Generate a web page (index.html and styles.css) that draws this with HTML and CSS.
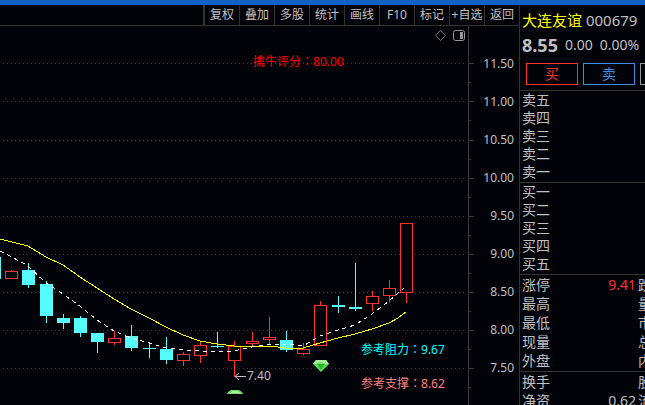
FILE: index.html
```html
<!DOCTYPE html>
<html lang="zh-CN">
<head>
    <meta charset="UTF-8">
    <meta name="viewport" content="width=device-width, initial-scale=1.0">
    <title>大连友谊 000679</title>
    <link rel="stylesheet" href="styles.css">
</head>
<body>
    <div class="top-strip"></div>
    <div class="workspace">
        <main class="chart-area">
            <nav class="toolbar">
                <button>复权</button>
                <button>叠加</button>
                <button>多股</button>
                <button>统计</button>
                <button>画线</button>
                <button>F10</button>
                <button>标记</button>
                <button>+自选</button>
                <button>返回</button>
            </nav>
            <div class="chart">
                <svg class="plot" viewBox="0 26 474 379" preserveAspectRatio="xMinYMin meet">
                    <g id="grid"></g>
                    <path class="axis" d="M468.5 26V405"/>
                    <g id="candles"></g>
                    <polyline class="ma-long" points="0,239 12,242 28,246 46,257 63,265 80,277 97,288 114,299 131,309 149,318 166,327 183,335 200,341 217,344 234,346 252,347 269,346 286,348 303,348 320,343 338,338 355,334 372,329 389,323 398,318 406,312"/>
                    <polyline class="ma-short" points="0,251 12,257 28,266 46,283 63,294 80,306 97,320 114,331 131,338 149,343 166,348 183,350 200,351 217,351 234,351 252,347 269,344 286,344 303,346 320,336 338,330 355,325 372,314 389,301 404,288"/>

                    <path class="tool-icon" d="M440.500 30.500L445.500 35.500L440.500 40.500L435.500 35.500Z"/>
                    <rect class="tool-icon panel-icon" x="453.500" y="30.500" width="11" height="10" rx="2"/>
                    <rect class="tool-fill" x="460" y="32" width="3" height="7"/>

                    <g class="gem">
                        <path d="M316 360H326L329 364L321 372L313 364Z" fill="#5fdd5a"/>
                        <path d="M316 360H326L329 364H313Z" fill="#a4f59b"/>
                        <path d="M317 364L319 362H323L325 364L321 370Z" fill="#25b82a"/>
                        <path d="M318 363H324" stroke="#e6ffe0"/>
                    </g>
                    <g class="gem">
                        <path d="M227 394L228 392L231 390H239L242 392L243 394Z" fill="#6fdc68"/>
                        <path d="M230 394L232 392H238L240 394" fill="none" stroke="#dcffd6"/>
                    </g>

                    <path class="low-arrow" d="M246 376.500H235M239 373L235 376.500L239 380"/>
                    <text class="low-label" x="247" y="380">7.40</text>
                    <text class="score" x="253" y="66">擒牛评分<tspan class="colon" lang="zh-TW">：</tspan>80.00</text>
                    <text class="resist" x="361" y="354">参考阻力<tspan class="colon" lang="zh-TW">：</tspan>9.67</text>
                    <text class="support" x="361" y="388">参考支撑<tspan class="colon" lang="zh-TW">：</tspan>8.62</text>
                </svg>
                <ul class="prices">
                    <li>11.50</li>
                    <li>11.00</li>
                    <li>10.50</li>
                    <li>10.00</li>
                    <li>9.50</li>
                    <li>9.00</li>
                    <li>8.50</li>
                    <li>8.00</li>
                    <li>7.50</li>
                </ul>
            </div>
        </main>

        <aside class="quote">
            <h1><span class="name">大连友谊</span> 000679</h1>
            <div class="price-row">
                <strong>8.55</strong>
                <span>0.00</span>
                <span>0.00%</span>
            </div>
            <div class="actions">
                <button class="buy">买</button>
                <button class="sell">卖</button>
                <button class="more" aria-label="更多"></button>
            </div>
            <table class="book">
                <tr><th>卖五</th></tr>
                <tr><th>卖四</th></tr>
                <tr><th>卖三</th></tr>
                <tr><th>卖二</th></tr>
                <tr><th>卖一</th></tr>
            </table>
            <table class="book">
                <tr><th>买一</th></tr>
                <tr><th>买二</th></tr>
                <tr><th>买三</th></tr>
                <tr><th>买四</th></tr>
                <tr><th>买五</th></tr>
            </table>
            <table class="stats">
                <tr><th>涨停</th><td class="up">9.41</td><th>跌停</th></tr>
                <tr><th>最高</th><td></td><th>量比</th></tr>
                <tr><th>最低</th><td></td><th>市值</th></tr>
                <tr><th>现量</th><td></td><th>总量</th></tr>
                <tr><th>外盘</th><td></td><th>内盘</th></tr>
            </table>
            <table class="stats">
                <tr><th>换手</th><td></td><th>股本</th></tr>
                <tr><th>净资</th><td>0.62</td><th>流通</th></tr>
            </table>
        </aside>
    </div>
    <script src="chart.js"></script>
</body>
</html>
```
FILE: styles.css
```css
* {
    box-sizing: border-box;
}

body {
    margin: 0;
    height: 100vh;
    display: flex;
    flex-direction: column;
    overflow: hidden;
    background: #020209;
    color: #c0c0c0;
    font-family: "Noto Sans", "Noto Sans CJK SC", sans-serif;
    font-size: 12px;
}

button {
    padding: 0;
    background: none;
    color: inherit;
    font-family: inherit;
    cursor: pointer;
}

.top-strip {
    flex: none;
    height: 5px;
    background: #1062c4;
}

.workspace {
    flex: 1;
    min-height: 0;
    display: flex;
}

.chart-area {
    flex: 1;
    min-width: 0;
}

/* toolbar */
.toolbar {
    display: flex;
    justify-content: flex-end;
    height: 21px;
    border-bottom: 1px solid #333;
}

.toolbar button {
    width: 35px;
    border: none;
    border-left: 1px solid #333;
    font-size: 12px;
    line-height: 20px;
    white-space: nowrap;
}

.toolbar button:first-child {
    width: 36px;
    border-left-width: 2px;
}

/* chart */
.chart {
    display: flex;
    align-items: flex-start;
}

.plot {
    display: block;
    flex: 1;
    min-width: 0;
}

.plot text {
    font-size: 12px;
}

.grid-line {
    stroke: #3a3a3a;
    stroke-dasharray: 1 3;
}

.axis {
    stroke: #3a3a3a;
    fill: none;
}

.up-candle {
    fill: #020209;
    stroke: #ff3232;
}

.down-candle {
    fill: #54fcfc;
    stroke: #54fcfc;
}

.ma-long,
.ma-short {
    fill: none;
    shape-rendering: crispEdges;
}

.ma-long {
    stroke: #ff0;
}

.ma-short {
    stroke: #fff;
    stroke-dasharray: 4 4;
}

.tool-icon {
    fill: none;
    stroke: #777;
}

.panel-icon {
    stroke: #999;
}

.tool-fill {
    fill: #999;
}

.low-arrow {
    fill: none;
    stroke: #c0c0c0;
}

.low-label {
    fill: #c0c0c0;
}

.score {
    fill: #f00;
}

.resist {
    fill: #0ff;
}

.support {
    fill: #ff8080;
}

.colon {
    font-family: "Noto Sans CJK TC", sans-serif;
}

.prices {
    flex: none;
    display: grid;
    grid-auto-rows: 38px;
    align-items: center;
    width: 45px;
    margin: 0;
    padding: 18px 5px 0 0;
    list-style: none;
    text-align: right;
}

/* quote panel */
.quote {
    flex: none;
    width: 126px;
    overflow: hidden;
    border-left: 1px solid #333;
    font-size: 14px;
}

.quote h1 {
    margin: 0;
    padding: 4px 2px 0;
    font-size: 15px;
    font-weight: normal;
    line-height: 22px;
    white-space: nowrap;
}

.name {
    color: #ff0;
}

.price-row {
    display: flex;
    align-items: center;
    gap: 7px;
    height: 27px;
    padding-left: 2px;
}

.price-row strong {
    font-size: 18px;
}

.actions {
    display: flex;
    gap: 5px;
    padding: 5px 0 5px 6px;
}

.actions button {
    flex: none;
    width: 52px;
    height: 22px;
    border: 1px solid #999;
    font-size: 14px;
    line-height: 20px;
}

.actions .buy {
    border-color: #ff3232;
    color: #ff3232;
}

.actions .sell {
    border-color: #3c8ee0;
    color: #3c8ee0;
}

.quote table {
    width: 240px;
    border-top: 1px solid #333;
    border-spacing: 0;
    table-layout: fixed;
}

.quote th,
.quote td {
    height: 18px;
    padding: 0 0 0 2px;
    font-weight: normal;
    line-height: 18px;
    text-align: left;
    white-space: nowrap;
}

.quote .stats th,
.quote .stats td {
    height: 19px;
    line-height: 19px;
}

.book,
.stats {
    padding-bottom: 1px;
}

.stats th:first-child {
    width: 40px;
}

.quote .stats td {
    width: 76px;
    padding: 0;
    text-align: right;
}

.quote .up {
    color: #ff3232;
}
```
FILE: chart.js
```javascript
const svgNS = 'http://www.w3.org/2000/svg';
const gridRows = [63, 101, 140, 178, 216, 254, 292, 330, 368];

// center x, body top, body bottom, wick top, wick bottom, rising
const candles = [
    [-6, 257, 278, 250, 282, false],
    [11, 271, 278, 270, 278, true],
    [28, 270, 284, 263, 287, false],
    [46, 284, 315, 281, 322, false],
    [63, 318, 322, 314, 328, false],
    [80, 318, 332, 316, 336, false],
    [97, 333, 341, 333, 352, false],
    [114, 338, 342, 331, 344, true],
    [131, 336, 347, 325, 350, false],
    [149, 348, 348, 342, 357, false],
    [166, 349, 359, 337, 363, false],
    [183, 354, 360, 352, 365, true],
    [200, 345, 355, 341, 362, true],
    [217, 346, 346, 332, 347, false],
    [234, 346, 360, 341, 376, true],
    [252, 341, 343, 332, 345, true],
    [269, 337, 339, 317, 344, true],
    [286, 340, 349, 331, 351, false],
    [303, 349, 353, 343, 354, true],
    [320, 305, 345, 301, 345, true],
    [338, 305, 306, 296, 312, false],
    [355, 307, 308, 263, 310, false],
    [372, 296, 303, 291, 310, true],
    [389, 288, 295, 280, 302, true],
    [406, 223, 292, 223, 302, true]
];

function add(parent, tag, attrs) {
    const el = document.createElementNS(svgNS, tag);
    for (const key in attrs) {
        el.setAttribute(key, attrs[key]);
    }
    parent.appendChild(el);
}

const grid = document.getElementById('grid');
gridRows.forEach(y => {
    add(grid, 'path', { class: 'grid-line', d: `M3 ${y + 0.5}H466` });
    add(grid, 'path', { class: 'axis', d: `M469 ${y + 0.5}H474M469 ${y + 19.5}H471` });
});

const group = document.getElementById('candles');
candles.forEach(([x, top, bottom, high, low, rising]) => {
    const name = rising ? 'up-candle' : 'down-candle';
    add(group, 'path', { class: name, d: `M${x + 0.5} ${high}V${low + 1}` });
    add(group, 'rect', { class: name, x: x - 5.5, y: top + 0.5, width: 12, height: bottom - top });
    // a flat body has no area, so it gets a line
    if (top === bottom) {
        add(group, 'path', { class: name, d: `M${x - 6} ${top + 0.5}H${x + 7}` });
    }
});
```
